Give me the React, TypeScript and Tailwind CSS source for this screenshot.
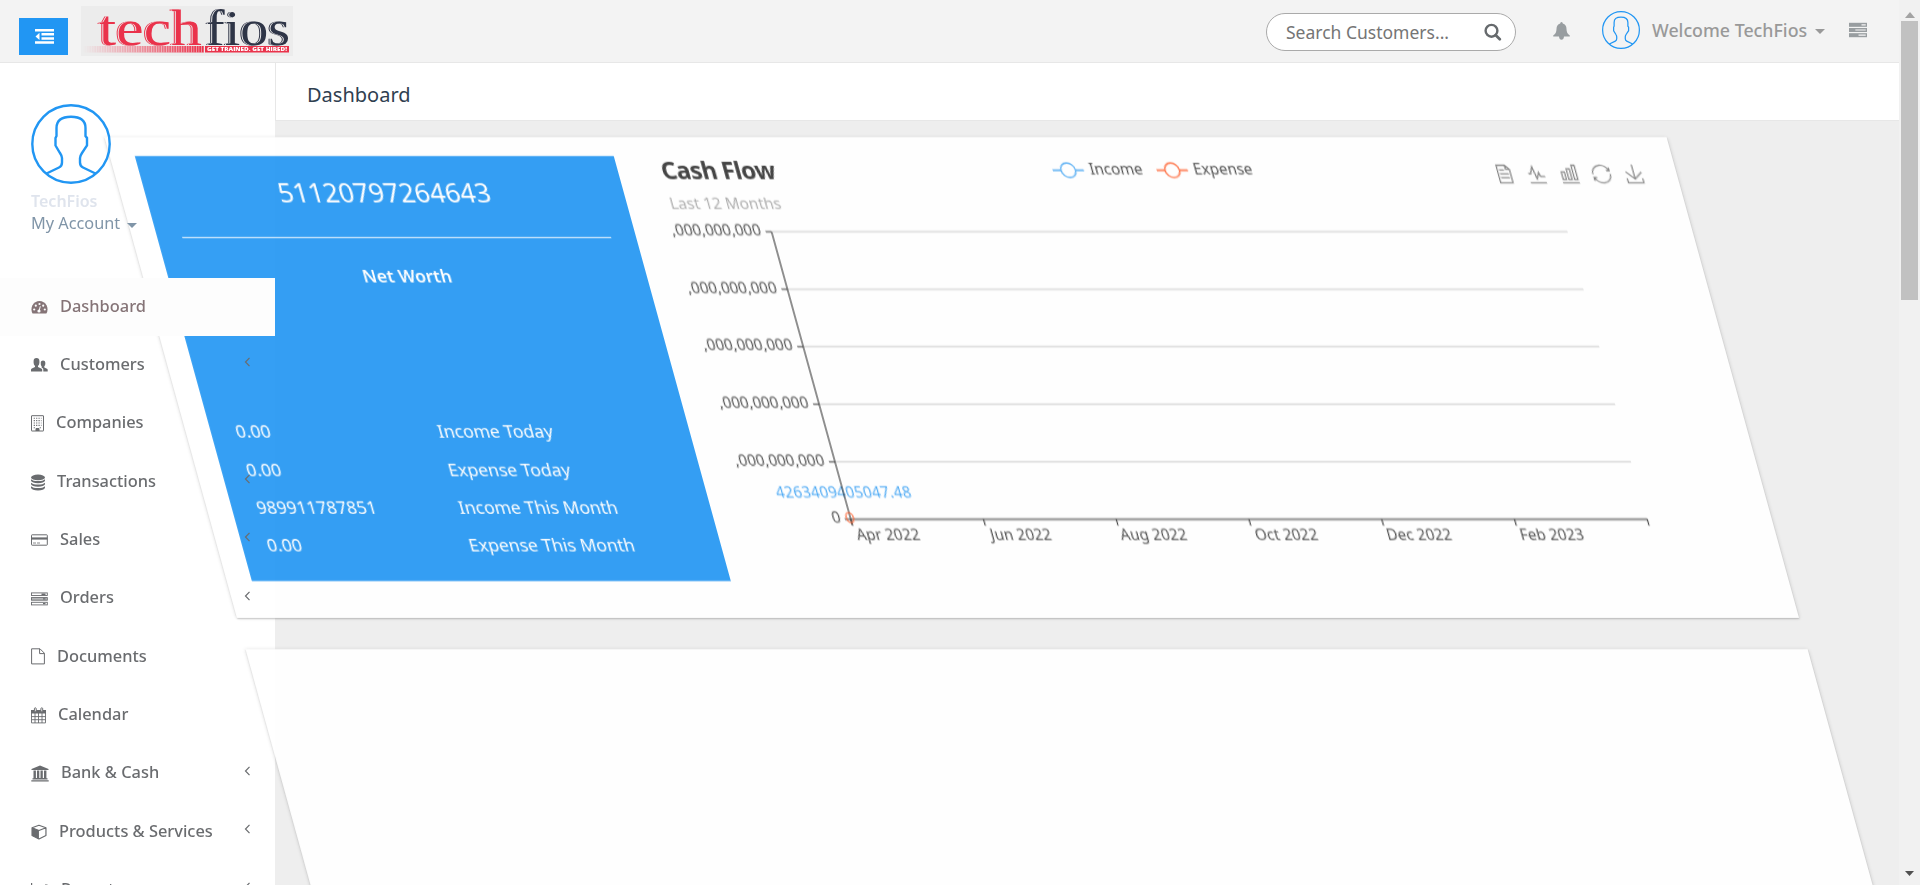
import React from "react";

type IconProps = { className?: string };

const MONTHS = ["Apr 2022", "Jun 2022", "Aug 2022", "Oct 2022", "Dec 2022", "Feb 2023"];

const TOOLS = [
  "M17.5,17.3H33 M17.5,17.3H33 M45.4,29.5h-28 M11.5,2v56H51V14.8L38.4,2H11.5z M38.4,2.2v12.7H51 M45.4,41.7h-28",
  "M4.1,28.9h7.1l9.3-22l7.4,38l9.7-19.7l3,12.8h14.9M4.1,58h51.4",
  "M6.7,22.9h10V48h-10V22.9zM24.9,13h10v35h-10V13zM43.2,2h10v46h-10V2zM3.1,58h53.7",
  "M47,18.9h9.8V8.7 M56.3,20.1 C52.1,9,40.5,0.6,26.8,2.1C12.6,3.7,1.6,16.2,2.1,30.6 M13,41.1H3.1v10.2 M3.7,39.9c4.2,11.1,15.8,19.5,29.5,18 c14.2-1.6,25.2-14.1,24.7-28.5",
  "M4.7,22.9L29.3,45.5L54.7,23.4M4.6,43.6L4.6,58L53.8,58L53.8,43.6M29.2,45.1L29.2,0",
];

function Avatar({ className, thin }: IconProps & { thin?: boolean }) {
  return (
    <svg viewBox="0 0 80 80" className={className} fill="none" stroke="#2196f3" strokeWidth={thin ? 2.6 : 2.4}>
      <circle cx="40" cy="40" r="38.7" />
      <path d="M15.5 69.5 L28 63.5 Q31 62 31 58.500 L31 54 Q31 52 29 49 L24.500 41.500 L24.500 34 L25.500 32 L25.500 24 Q25.500 12.700 40 12.700 Q54.500 12.700 54.500 24 L54.500 32 L56 34 L56 41.500 L51 49 Q49 52 49 54 L49 58.500 Q49 62 52 63.500 L64.500 69.500" />
    </svg>
  );
}

function Gauge() {
  return (
    <svg width="17" height="16" viewBox="0 0 17 16">
      <path fill="currentColor" d="M8.500 2 A8.300 8.300 0 0 0 1.600 14.500 H15.400 A8.300 8.300 0 0 0 8.500 2Z" />
      <g fill="#fdfdfd">
        <circle cx="3.200" cy="10.500" r="1.100" />
        <circle cx="4.800" cy="6.700" r="1.100" />
        <circle cx="8.500" cy="5" r="1.100" />
        <circle cx="12.200" cy="6.700" r="1.100" />
        <circle cx="13.800" cy="10.500" r="1.100" />
        <circle cx="8" cy="12" r="1.600" />
      </g>
      <path d="M8.200 11.500 L9.300 7.300" stroke="#fdfdfd" />
    </svg>
  );
}

function Users() {
  return (
    <svg width="17" height="16" viewBox="0 0 17 16" fill="currentColor">
      <path d="M12.300 14.500 H16.700 V12.700 Q16.700 12 16 11.700 L13.300 10.400 V9.300 Q14.300 8.300 14.300 7 V5.500 Q14.300 3.400 12 3.400 Q10 3.400 9.800 5 V7.500 Q10 8.800 10.700 9.400 V10.700 L11.700 11.200 Q12.300 11.700 12.300 12.500Z" />
      <path d="M0 14.500 V12.700 Q0 11.800 .9 11.400 L4 10 V9 Q2.600 7.600 2.600 5.700 V4 Q2.600 1 5.500 1 Q8.400 1 8.400 4 V5.700 Q8.400 7.600 7 9 V10 L10.200 11.400 Q11.200 11.800 11.200 12.700 V14.500Z" />
    </svg>
  );
}

function Building() {
  return (
    <svg width="13" height="17" viewBox="0 0 13 17" fill="none" stroke="currentColor">
      <rect x=".5" y=".7" width="12" height="15.300" rx=".3" />
      <path strokeWidth="1.100" strokeDasharray="1.200 1.200" d="M2.700 3.200H10.500 M2.700 5.600H10.500 M2.700 8H10.500 M2.700 10.400H10.500 M2.700 12.800H5 M8.700 12.800H10.500" />
      <path d="M5 16V13.500H8V16" fill="currentColor" />
    </svg>
  );
}

function Database() {
  return (
    <svg width="14" height="17" viewBox="0 0 14 17" fill="currentColor">
      <ellipse cx="7" cy="3.400" rx="7" ry="2.800" />
      <path d="M0 5.200 Q2 7.100 7 7.100 T14 5.200 V6.800 Q13 9.200 7 9.200 T0 6.800Z M0 8.700 Q2 10.600 7 10.600 T14 8.700 V10.300 Q13 12.700 7 12.700 T0 10.300Z M0 12.200 Q2 14.100 7 14.100 T14 12.200 V13.800 Q13 16.400 7 16.400 T0 13.800Z" />
    </svg>
  );
}

function Card() {
  return (
    <svg width="17" height="12" viewBox="0 0 17 12" fill="none" stroke="currentColor">
      <rect x=".5" y=".8" width="15.800" height="10.400" rx=".6" />
      <path strokeWidth="2.200" d="M.5 4.500H16.500" />
      <path strokeWidth=".8" strokeDasharray="3 1" d="M2 9H9" />
    </svg>
  );
}

function Server({ className }: IconProps) {
  return (
    <svg viewBox="0 0 17 14" className={className}>
      <g fill="currentColor">
        <rect y=".2" width="17" height="3.800" />
        <rect y="5.100" width="17" height="3.800" />
        <rect y="10" width="17" height="3.800" />
      </g>
      <path stroke="#f4f4f4" strokeWidth="1.100" d="M11.800 2.100H15.800 M6 7H15.800 M9 11.900H15.800" />
    </svg>
  );
}

function Rack() {
  return (
    <svg width="17" height="14" viewBox="0 0 17 14" fill="none" stroke="currentColor">
      <rect x=".5" y=".9" width="15.800" height="2.600" strokeWidth=".9" />
      <rect x=".5" y="5.600" width="15.800" height="2.600" strokeWidth=".9" fill="#b9babc" />
      <rect x=".5" y="10.300" width="15.800" height="2.600" strokeWidth=".9" />
      <path strokeWidth="1.400" d="M10.500 2.200H14.500 M12 6.900H14.500 M12 11.600H14.500" />
    </svg>
  );
}

function File() {
  return (
    <svg width="14" height="17" viewBox="0 0 14 17" fill="none" stroke="currentColor">
      <path d="M.6 .8 H9 L13.400 5.200 V15.900 H.6Z M8.600 1 V5.600 H13.300" />
    </svg>
  );
}

function Calendar() {
  return (
    <svg width="15" height="17" viewBox="0 0 15 17" fill="none" stroke="currentColor">
      <path fill="currentColor" stroke="none" d="M0 3H15V6.500H0Z" />
      <path d="M.5 3.500V15.900H14.500V3.500 M.5 9.600H14.500 M.5 12.700H14.500 M4 6V16 M7.500 6V16 M11 6V16" strokeWidth=".9" />
      <rect x="3.400" y=".8" width="1.800" height="4" rx=".9" fill="#fff" />
      <rect x="9.900" y=".8" width="1.800" height="4" rx=".9" fill="#fff" />
    </svg>
  );
}

function Bank() {
  return (
    <svg width="18" height="17" viewBox="0 0 18 17" fill="currentColor">
      <path d="M9 .4 L17.500 3.900 V5 H.5 V3.900Z M2.500 5.600H4.900V13H6V5.600H8.300V13H9.500V5.600H11.800V13H13V5.600H15.400V13.800H2.500Z M1.500 13.300H16.500V14.400H1.500Z M.3 15.200H17.700V16.500H.3Z" />
    </svg>
  );
}

function Cube() {
  return (
    <svg width="16" height="16" viewBox="0 0 15.500 16">
      <path fill="none" stroke="currentColor" strokeWidth="1.200" strokeLinejoin="round" d="M7.700 1.300 L14.700 3.800 V11.500 L7.700 15 L.8 11.500 V3.800Z M.8 3.800 L7.700 6.500 L14.700 3.800" />
      <path fill="currentColor" d="M.8 3.800 L7.700 6.500 V15 L.8 11.500Z" />
    </svg>
  );
}

function Bars() {
  return (
    <svg width="18" height="16" viewBox="0 0 18 16" fill="currentColor">
      <path d="M0 1H1.200V14H18V15.200H0Z M3.500 8H6V13H3.500Z M7 4.500H9.500V13H7Z M10.500 6.500H13V13H10.500Z M14 2.500H16.500V13H14Z" />
    </svg>
  );
}

const NAV: { label: string; icon: () => React.ReactElement; more?: boolean; active?: boolean }[] = [
  { label: "Dashboard", icon: Gauge, active: true },
  { label: "Customers", icon: Users, more: true },
  { label: "Companies", icon: Building },
  { label: "Transactions", icon: Database, more: true },
  { label: "Sales", icon: Card, more: true },
  { label: "Orders", icon: Rack, more: true },
  { label: "Documents", icon: File },
  { label: "Calendar", icon: Calendar },
  { label: "Bank & Cash", icon: Bank, more: true },
  { label: "Products & Services", icon: Cube, more: true },
  { label: "Reports", icon: Bars, more: true },
];

function Caret({ className }: IconProps) {
  return (
    <svg width="10" height="5" viewBox="0 0 10 5" className={className}>
      <path fill="currentColor" d="M0 0H10L5 5Z" />
    </svg>
  );
}

function Logo() {
  return (
    <svg width="212" height="50" viewBox="0 0 212 50" overflow="visible" className="ml-[13px] mt-[6px] bg-[#ececec]" fontFamily="'Liberation Serif', serif">
      <defs>
        <linearGradient id="fade" x1="0" x2="1">
          <stop offset="0" stopColor="#ec3049" stopOpacity="0" />
          <stop offset="1" stopColor="#ec3049" />
        </linearGradient>
        <pattern id="ticks" width="2.500" height="8" patternUnits="userSpaceOnUse">
          <rect width="0.800" height="8" fill="#ececec" opacity=".6" />
        </pattern>
        <filter id="inline" x="-5%" y="-5%" width="110%" height="110%">
          <feOffset in="SourceGraphic" dx="-2" result="left" />
          <feOffset in="SourceAlpha" dx="-1" result="near" />
          <feComposite in="left" in2="near" operator="out" result="echo" />
          <feMerge>
            <feMergeNode in="echo" />
            <feMergeNode in="SourceGraphic" />
          </feMerge>
        </filter>
      </defs>
      <g fontSize="50" filter="url(#inline)">
        <text x="18" y="38.500" textLength="103" lengthAdjust="spacingAndGlyphs" fill="#ea334b">tech</text>
        <text x="125" y="38.500" textLength="84" lengthAdjust="spacingAndGlyphs" fill="#2f3446">fios</text>
      </g>
      <rect x="2" y="40" width="121" height="6.500" fill="url(#fade)" />
      <rect x="2" y="40" width="121" height="6.500" fill="url(#ticks)" />
      <rect x="124" y="40" width="84" height="6.500" fill="#ea334b" />
      <text x="126" y="45.300" fontSize="5.200" fontWeight="800" fontFamily="'Open Sans', sans-serif" fill="#fff" textLength="80" lengthAdjust="spacingAndGlyphs">GET TRAINED. GET HIRED!</text>
    </svg>
  );
}

function Header() {
  return (
    <header className="relative z-20 flex h-[63px] shrink-0 items-start border-b border-[#e7e7e7] bg-[#f3f3f3]">
      <button className="ml-[19px] mt-[18px] flex h-[37px] w-[49px] items-center justify-center bg-[#2196f3]">
        <svg width="19" height="15" viewBox="0 0 19 15" fill="#fff" className="-mt-px ml-px">
          <path d="M0 0H19V2.500H0Z M6.500 4.100H19V6.600H6.500Z M6.500 8.200H19V10.700H6.500Z M0 12.300H19V14.800H0Z M4.500 3.700V11L.5 7.400Z" />
        </svg>
      </button>
      <Logo />
      <div className="ml-auto mt-[13px] flex h-[38px] w-[250px] items-center rounded-full border border-[#aaa] bg-white pl-[19px] pr-[13px]">
        <span className="flex-1 text-[17.500px] text-[#757575]">Search Customers...</span>
        <svg width="18" height="18" viewBox="0 0 18 18" fill="none" stroke="#666a6d">
          <circle cx="7.500" cy="7.800" r="5.900" strokeWidth="2.400" />
          <path d="M11.800 12.200L15.800 16.300" strokeWidth="2.700" strokeLinecap="round" />
        </svg>
      </div>
      <svg width="17" height="18" viewBox="0 0 17 18" className="ml-[37px] mt-[22px]" fill="#989da0">
        <path d="M8.500 0Q9.800 0 9.800 1.500Q13.500 2.500 13.500 7Q13.500 11.500 16.800 13.500V14.600H.2V13.500Q3.500 11.500 3.500 7Q3.500 2.500 7.200 1.500Q7.200 0 8.500 0Z M6 14.500H11Q10.600 17.800 8.500 17.800Q6.400 17.800 6 14.500Z" />
      </svg>
      <Avatar thin className="ml-[32px] mt-[11px] size-[38px]" />
      <span className="ml-[12px] mt-[18px] w-[157px] whitespace-nowrap text-[17.800px] font-medium leading-[24px] text-[#999]">Welcome TechFios</span>
      <Caret className="ml-[6px] mt-[29px] text-[#999]" />
      <Server className="ml-[24px] mr-[32px] mt-[22px] h-[16px] w-[18px] text-[#989da0]" />
    </header>
  );
}

function Sidebar() {
  return (
    <aside className="flex w-[275px] shrink-0 flex-col bg-white">
      <div className="relative z-10 flex h-[215px] shrink-0 flex-col pl-[31px] pt-[41px]">
        <Avatar className="size-[80px]" />
        <span className="mt-[6px] text-[16px] font-semibold leading-[23px] text-[#dfe4ed]">TechFios</span>
        <span className="-mt-px flex items-center text-[16.300px] leading-[23px] text-[#8095a8]">
          My Account
          <Caret className="ml-[7px] mt-[3px]" />
        </span>
      </div>
      <nav className="relative z-10">
        {NAV.map(({ label, icon: Icon, more, active }) => (
          <a
            key={label}
            className={
              active
                ? "flex h-[58.300px] items-center gap-[12px] bg-[#fdfdfd] pl-[31px] pr-[24px] text-[#857477]"
                : "flex h-[58.300px] items-center gap-[12px] pl-[31px] pr-[24px] text-[#6a6c6f]"
            }
          >
            <Icon />
            <span className="-mt-[2px] whitespace-nowrap text-[16.400px] font-medium">{label}</span>
            {more && (
              <svg width="7" height="10" viewBox="0 0 7 10" className="-mt-[6px] ml-auto" fill="none" stroke="#6a6c6f" strokeWidth="1.200">
                <path d="M5.500 .8L1.500 5L5.500 9.200" />
              </svg>
            )}
          </a>
        ))}
      </nav>
    </aside>
  );
}

function CashFlow() {
  return (
    <svg width="994" height="426" viewBox="0 0 994 426" className="shrink-0" fontFamily="'Noto Sans', sans-serif" fontSize="15" fill="#444">
      <text x="6.500" y="23.500" fontSize="24" fontWeight="700" fill="#333" textLength="114">Cash Flow</text>
      <text x="6" y="53.500" fill="#aaa" fontSize="15.500" textLength="111">Last 12 Months</text>
      {[
        { name: "Income", x: 398, color: "#42a5f5" },
        { name: "Expense", x: 502, color: "#ff5722" },
      ].map((s) => (
        <g key={s.name}>
          <path d={`M${s.x} 14.200h8m15.200 0h8`} stroke={s.color} strokeWidth="2" opacity=".75" />
          <circle cx={s.x + 15.600} cy="14.200" r="7.300" fill="none" stroke={s.color} strokeWidth="1.600" opacity=".85" />
          <text x={s.x + 37} y="18.500">{s.name}</text>
        </g>
      ))}
      {TOOLS.map((d, i) => (
        <svg key={i} x={839 + i * 32.500} y="8.600" width="18.800" height="18.800" viewBox="0 0 60 60" overflow="visible">
          <path d={d} fill="none" stroke="#777" strokeWidth="4" />
        </svg>
      ))}
      {[0, 1, 2, 3, 4].map((i) => (
        <g key={i}>
          <path d={`M100 ${75.700 + i * 57.500}H896`} stroke="#ccc" strokeWidth="1.200" />
          <path d={`M94 ${75.700 + i * 57.500}h6`} stroke="#333" strokeWidth="1.200" />
          <text x="89.500" y={79.500 + i * 57.500} textAnchor="end" textLength="89.500">,000,000,000</text>
        </g>
      ))}
      <text x="90" y="367" textAnchor="end">0</text>
      <text x="100" y="342" textAnchor="middle" fill="#42a5f5" textLength="135">4263409405047.48</text>
      <path d="M94 363.200H896.500" stroke="#333" strokeWidth="2" opacity=".6" />
      <path d="M100 75.700V369" stroke="#333" strokeWidth="1.200" />
      {[0, 1, 2, 3, 4, 5, 6].map((i) => (
        <path key={i} d={`M${100 + i * 132.750} 363v6.500`} stroke="#333" strokeWidth="1.200" />
      ))}
      {MONTHS.map((m, i) => (
        <text key={m} x={133 + i * 132.750} y="384.500" textAnchor="middle">{m}</text>
      ))}
      <ellipse cx="99.500" cy="361.500" rx="3.600" ry="5" fill="none" stroke="#ff5722" strokeWidth="1.500" opacity=".8" />
    </svg>
  );
}

const TOTALS = [
  ["0.00", "Income Today"],
  ["0.00", "Expense Today"],
  ["989911787851", "Income This Month"],
  ["0.00", "Expense This Month"],
];

function NetWorth() {
  return (
    <section className="flex h-[425.500px] w-[478.500px] shrink-0 flex-col bg-[#2196f3] px-[25px] text-white">
      <p className="mt-[18.500px] text-center text-[26.500px] leading-[36px]">51120797264643</p>
      <hr className="mt-[26.500px] border-white" />
      <p className="mt-[25px] text-center text-[17.500px] font-semibold leading-[24px]">Net Worth</p>
      <div className="mt-[126px] flex flex-col">
        {TOTALS.map(([value, label]) => (
          <div key={label} className="flex h-[37.700px] items-center text-[17.500px]">
            <span className="w-[202px]">{value}</span>
            <span>{label}</span>
          </div>
        ))}
      </div>
    </section>
  );
}

function Main() {
  return (
    <main className="flex min-w-0 flex-1 flex-col">
      <div className="flex h-[58px] shrink-0 items-center border-b border-l border-[#e7e7e7] bg-white pl-[31px] pt-[7px] text-[20px] text-[#2f4050]">Dashboard</div>
      <div className="px-8 pt-[16px]">
        <div className="flex w-[1561.500px] origin-top-left -translate-x-[202.500px] skew-x-[15.400deg] flex-col gap-[31px] opacity-[.91]">
          <div className="flex h-[481px] gap-[37.500px] bg-white pl-[25px] pt-[18.500px] shadow-[0_1px_4px_rgba(0,0,0,0.18),0_1px_1px_rgba(0,0,0,0.24)]">
            <NetWorth />
            <CashFlow />
          </div>
          <div className="h-[420px] bg-white shadow-[0_1px_4px_rgba(0,0,0,0.18),0_1px_1px_rgba(0,0,0,0.24)]" />
        </div>
      </div>
    </main>
  );
}

function Scrollbar() {
  return (
    <div className="relative z-20 flex w-[21px] shrink-0 flex-col items-center bg-[#f1f1f1]">
      <svg width="10" height="6" viewBox="0 0 10 6" className="mt-[12px]">
        <path d="M0 6L5 0L10 6Z" fill="#a3a3a3" />
      </svg>
      <div className="mt-[3px] h-[279px] w-[17px] bg-[#c1c1c1]" />
      <svg width="9" height="5" viewBox="0 0 9 5" className="mb-[9px] mt-auto">
        <path d="M0 0H9L4.500 5Z" fill="#505050" />
      </svg>
    </div>
  );
}

export default function App() {
  return (
    <div className="flex h-[885px] w-[1920px] overflow-hidden bg-[#eee] font-['Noto_Sans',sans-serif]">
      <div className="flex min-w-0 flex-1 flex-col">
        <Header />
        <div className="flex min-h-0 flex-1">
          <Sidebar />
          <Main />
        </div>
      </div>
      <Scrollbar />
    </div>
  );
}
